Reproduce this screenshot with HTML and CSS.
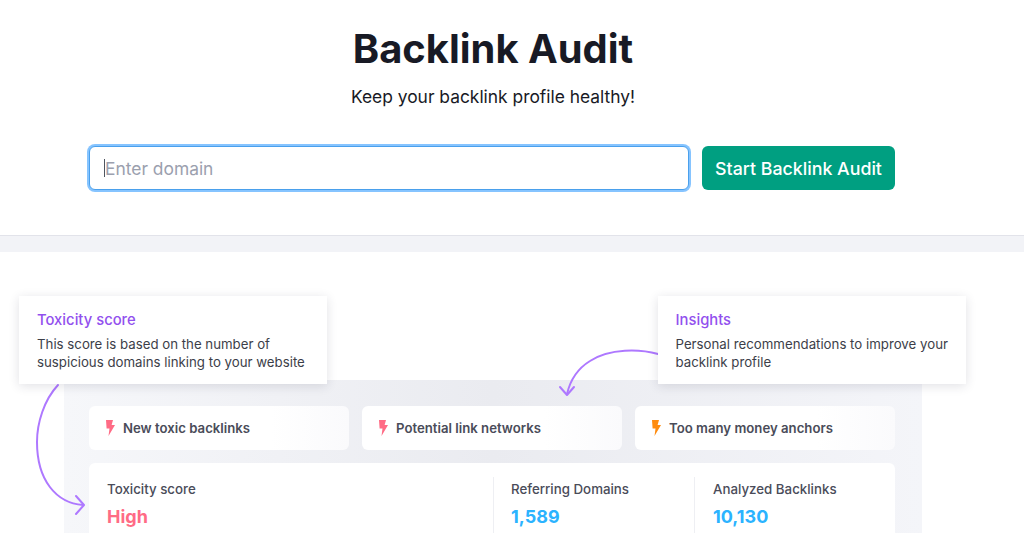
FILE: index.html
```html
<!DOCTYPE html>
<html lang="en">
<head>
<meta charset="utf-8">
<title>Backlink Audit</title>
<link rel="stylesheet" href="styles.css">
</head>
<body>
<header class="hero">
  <h1 class="hero-title">Backlink Audit</h1>
  <p class="hero-sub">Keep your backlink profile healthy!</p>
  <form class="search">
    <div class="search-input"><span class="caret"></span><span class="placeholder">Enter domain</span></div>
    <div class="search-btn">Start Backlink Audit</div>
  </form>
</header>
<div class="divider"></div>
<section class="showcase">
  <div class="panel">
    <div class="insights">
      <div class="insight"><svg class="bolt" viewBox="0 0 10 16"><path d="M1 0h7L6.600 5H10L3.500 16l1-7.500H1.600z" fill="#ff6b85"/></svg>New toxic backlinks</div>
      <div class="insight"><svg class="bolt" viewBox="0 0 10 16"><path d="M1 0h7L6.600 5H10L3.500 16l1-7.500H1.600z" fill="#ff6b85"/></svg>Potential link networks</div>
      <div class="insight"><svg class="bolt" viewBox="0 0 10 16"><path d="M1 0h7L6.600 5H10L3.500 16l1-7.500H1.600z" fill="#ff8c0f"/></svg>Too many money anchors</div>
    </div>
    <div class="stats">
      <div class="stat stat-score"><div class="stat-label">Toxicity score</div><div class="stat-value high">High</div></div>
      <div class="stat stat-domains"><div class="stat-label">Referring Domains</div><div class="stat-value blue">1,589</div></div>
      <div class="stat stat-links"><div class="stat-label">Analyzed Backlinks</div><div class="stat-value blue">10,130</div></div>
    </div>
  </div>
  <svg class="arrows" viewBox="0 0 1024 282" fill="none" stroke="#ae78ff" stroke-width="2" stroke-linecap="round" stroke-linejoin="round">
    <path d="M58 133C44 148 37 171 37 190C37 228 56 251 83 253"/>
    <path d="M76 244l8 9l-8 9"/>
    <path d="M658 102C640 97 610 96 590 109C577 117 570 129 567 142"/>
    <path d="M560 135l7 8l7-8"/>
  </svg>
  <aside class="note note-left">
    <div class="note-title">Toxicity score</div>
    <p class="note-text">This score is based on the number of suspicious domains linking to your website</p>
  </aside>
  <aside class="note note-right">
    <div class="note-title">Insights</div>
    <p class="note-text">Personal recommendations to improve your backlink profile</p>
  </aside>
</section>
</body>
</html>
```
FILE: styles.css
```css
* { box-sizing: border-box; }
html, body { margin: 0; height: 533px; overflow: hidden; }
body { background: #fff; color: #181a25; font-family: Inter, "Liberation Sans", sans-serif; }

.hero { height: 235px; padding: 26px 38px 0 0; display: flex; flex-direction: column; align-items: center; }
.hero-title { margin: 0; font-size: 39.900px; line-height: 46px; font-weight: 700; color: #181a25; }
.hero-sub { margin: 13px 0 0; font-size: 17.400px; line-height: 24px; color: #181a25; }

.search { margin-top: 37px; width: 808px; display: flex; gap: 13px; align-items: center; }
.search-input { width: 600px; height: 44px; padding-left: 14px; display: flex; align-items: center; background: #fff; border: 1px solid #4aa0ec; border-radius: 6px; box-shadow: 0 0 0 2px #86c4ff; }
.caret { width: 1px; height: 18px; background: #4f5560; }
.placeholder { font-size: 17.400px; color: #9ba0ae; }
.search-btn { width: 193px; height: 44px; display: flex; align-items: center; justify-content: center; background: #009f81; color: #fff; border-radius: 6px; font-size: 17.800px; font-weight: 500; }

.divider { height: 17px; background: #f2f3f7; border-top: 1px solid #e2e3ea; }

.showcase { position: relative; height: 281px; }
.panel { position: absolute; left: 64px; top: 128px; width: 858px; height: 200px; padding: 26px 27px 0 25px; background: linear-gradient(90deg, #f6f7fa, #eaebf0 50%, #f4f5f9); }
.insights { display: flex; gap: 13px; }
.insight { flex: 1; height: 44px; padding-left: 16px; display: flex; align-items: center; gap: 8px; background: linear-gradient(90deg, #fff 70%, #fafafc); border-radius: 6px; font-size: 13.200px; font-weight: 600; color: #4a4c59; }
.bolt { width: 10px; height: 16px; flex: none; }

.stats { margin-top: 13px; height: 160px; padding-top: 14px; display: flex; background: #fff; border-radius: 6px; }
.stat { padding-top: 3px; border-left: 1px solid #eeeff3; }
.stat-score { width: 404px; padding-left: 18px; border-left: 0; }
.stat-domains { width: 201px; padding-left: 17px; }
.stat-links { padding-left: 18px; }
.stat-label { font-size: 13.300px; line-height: 18px; font-weight: 500; color: #4a4c59; }
.stat-value { margin-top: 7px; font-size: 18px; line-height: 24px; font-weight: 700; }
.high { color: #ff6b85; }
.blue { color: #2bb3ff; }

.arrows { position: absolute; left: 0; top: 0; width: 1024px; height: 282px; z-index: 1; }

.note { position: absolute; top: 44px; height: 88px; padding: 15px 18px 0; background: #fff; box-shadow: 0 2px 10px rgba(40, 40, 70, .14); z-index: 2; }
.note-left { left: 19px; width: 308px; }
.note-right { left: 658px; width: 308px; padding-left: 17.500px; }
.note-title { font-size: 14.800px; line-height: 18px; font-weight: 500; color: #9250ee; }
.note-text { margin: 6px 0 0; font-size: 13.250px; line-height: 18px; color: #3c3e49; }
```
